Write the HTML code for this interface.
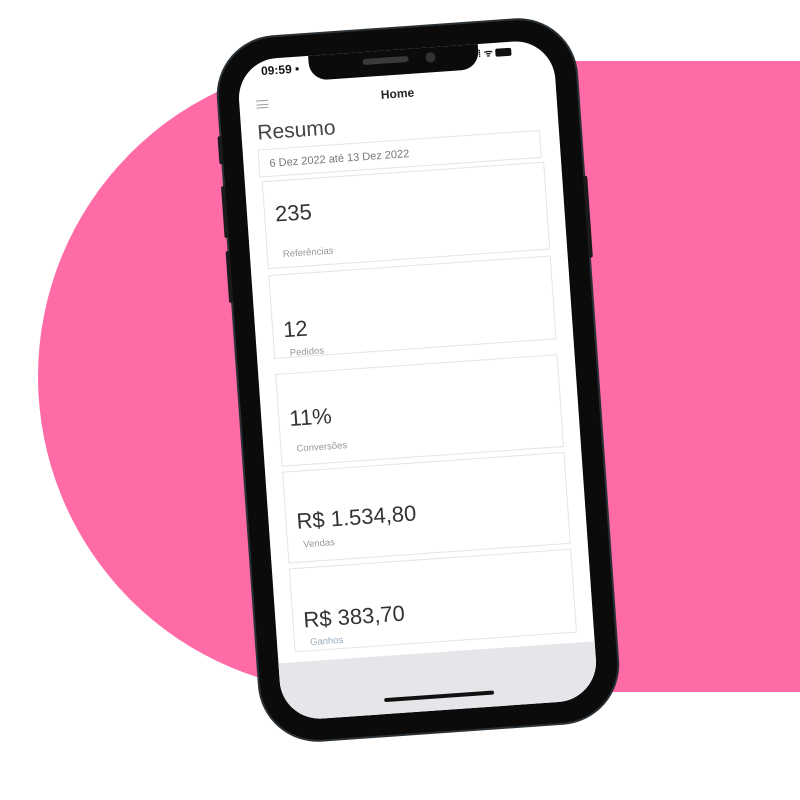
<!DOCTYPE html>
<html><head><meta charset="utf-8"><style>
*{margin:0;padding:0;box-sizing:border-box}
body{width:800px;height:800px;background:#fff;position:relative;overflow:hidden;font-family:"Liberation Sans",sans-serif}
.pk{position:absolute;background:#ff6ba6}
#phone{position:absolute;left:239px;top:28px;width:358px;height:704px;border-radius:58px;background:#0b0b0b;box-shadow:0 0 0 2px #2a3136;transform:rotate(-4deg);transform-origin:179px 352px}
.btn{position:absolute;background:#1a1a1a;width:4px;border-radius:2px}
#scr{position:absolute;left:20px;top:21px;width:317px;height:662px;border-radius:40px;background:#fff;overflow:hidden}
#notch{position:absolute;left:72px;top:-2px;width:170px;height:27px;background:#0b0b0b;border-radius:0 0 18px 18px}
.abs{position:absolute}
.card{position:absolute;left:17px;width:283px;border:1px solid #e4e4e4;background:#fff}
.num{position:absolute;left:10px;color:#333;font-size:22px}
.lbl{position:absolute;left:15px;color:#999;font-size:9.5px}
</style></head><body>
<div class="pk" style="left:38px;top:61px;width:630px;height:631px;border-radius:50%"></div>
<div class="pk" style="left:353px;top:61px;width:447px;height:631px"></div>
<div id="phone">
 <div class="btn" style="left:-4px;top:95px;height:28px"></div>
 <div class="btn" style="left:-4px;top:145px;height:52px"></div>
 <div class="btn" style="left:-4px;top:210px;height:52px"></div>
 <div class="btn" style="left:358px;top:160px;height:82px"></div>
 <div id="scr">
  <div id="notch"><div class="abs" style="left:54px;top:9px;width:46px;height:6px;border-radius:3px;background:#3a3a3a"></div><div class="abs" style="left:117px;top:7px;width:10px;height:10px;border-radius:50%;background:#333"></div></div>
  <div class="abs" style="left:24px;top:5px;font-size:12px;font-weight:bold;color:#111">09:59 ▪</div>
  <div class="abs" style="left:238px;top:2px;font-size:10px;font-weight:bold;color:#111">⁞⁞ ᯤ <span style="display:inline-block;width:16px;height:8px;background:#111;border-radius:2px;vertical-align:middle"></span></div>
  <div class="abs" style="left:0;width:317px;top:37px;text-align:center;font-size:12px;font-weight:bold;color:#222">Home</div>
  <div class="abs" style="left:17px;top:41px;width:12px;height:8px;border-top:1px solid #999;border-bottom:1px solid #999"><div style="margin-top:2.5px;border-top:1px solid #999"></div></div>
  <div class="abs" style="left:16px;top:62px;font-size:21px;color:#444">Resumo</div>
  <div class="abs" style="left:15px;top:90px;width:283px;height:28px;border:1.5px solid #e4e4e4;font-size:11px;color:#777;padding:8px 0 0 10px">6 Dez 2022 até 13 Dez 2022</div>
  <div class="card" style="top:122px;height:88px"><div class="num" style="top:20px">235</div><div class="lbl" style="top:68px">Referências</div></div>
  <div class="card" style="top:216px;height:84px"><div class="num" style="top:42px">12</div><div class="lbl" style="top:73px">Pedidos</div></div>
  <div class="card" style="top:315px;height:93px"><div class="num" style="top:32px">11%</div><div class="lbl" style="top:70px">Conversões</div></div>
  <div class="card" style="top:413px;height:92px"><div class="num" style="top:37px">R$ 1.534,80</div><div class="lbl" style="top:68px">Vendas</div></div>
  <div class="card" style="top:510px;height:84px"><div class="num" style="top:39px">R$ 383,70</div><div class="lbl" style="top:69px;color:#9ab">Ganhos</div></div>
  <div class="abs" style="left:0;top:604px;width:317px;height:60px;background:#e6e6ea"></div>
  <div class="abs" style="left:103px;top:646px;width:110px;height:4px;border-radius:2px;background:#111"></div>
 </div>
</div>
</body></html>
